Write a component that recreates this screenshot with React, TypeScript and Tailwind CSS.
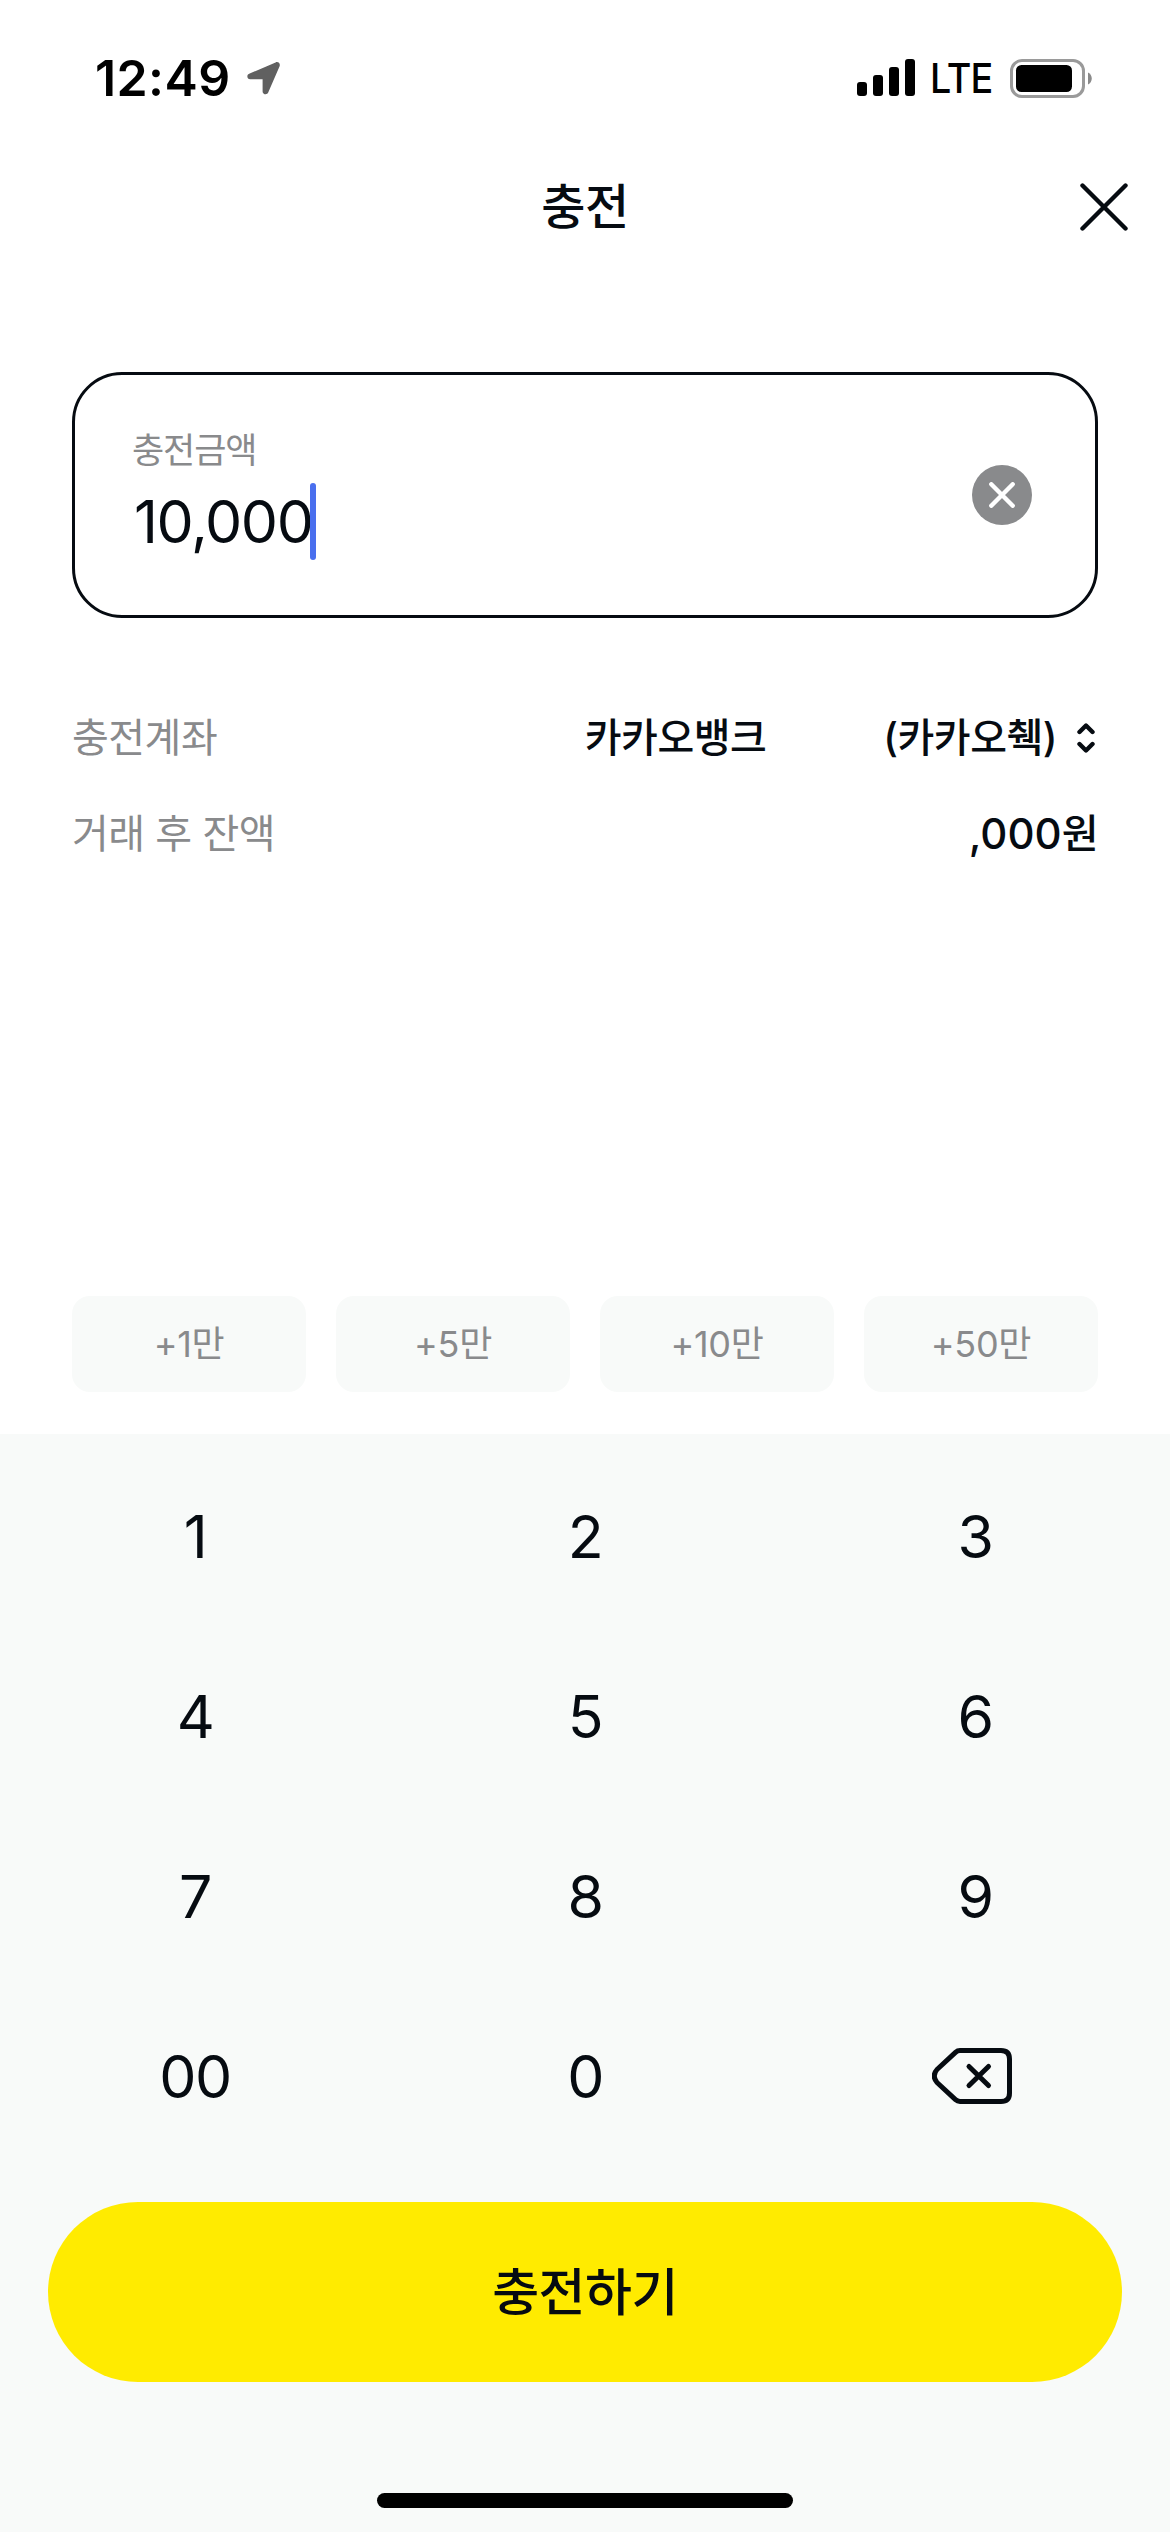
import type { ReactNode } from "react";

const quickAmounts = ["+1만", "+5만", "+10만", "+50만"];
const keys = ["1", "2", "3", "4", "5", "6", "7", "8", "9", "00", "0"];

function StatusBar() {
  return (
    <div className="flex h-[156px] items-start justify-between pt-[54px] pr-[78px] pl-[95px] text-black">
      <div className="flex h-12 items-center">
        <span className="w-[152px] text-[50px] leading-[48px] font-semibold tracking-[0.4px]">
          12:49
        </span>
        <svg width="34" height="34" viewBox="0 0 34 34" fill="#606060">
          <path d="M28.6 1.4C31.2 0.3 33.6 2.6 32.6 5.2L21.2 31.6C20.2 34.2 15.6 33.6 15.6 30.4V18.2H3.2C0 18.2 -0.7 14 2.1 12.8Z" />
        </svg>
      </div>
      <div className="flex h-12 items-center">
        <svg width="58" height="38" viewBox="0 0 58 38">
          <rect x="0" y="23" width="10" height="14" rx="3" />
          <rect x="16" y="16" width="10" height="21" rx="3" />
          <rect x="32" y="8" width="10" height="29" rx="3" />
          <rect x="48" y="0" width="10" height="37" rx="3" />
        </svg>
        <span className="ml-[15px] w-[80px] origin-left scale-x-92 text-[41px] leading-[50px] font-medium tracking-[-1px]">
          LTE
        </span>
        <svg width="82" height="39" viewBox="0 0 82 39">
          <rect
            x="1.5"
            y="1.5"
            width="72"
            height="36"
            rx="10.5"
            fill="none"
            stroke="#9a9a9a"
            strokeWidth="3"
          />
          <rect x="6" y="6" width="56" height="27" rx="5.5" />
          <path d="M78 13.5C83 15.5 83 23.5 78 25.5Z" fill="#8a8a8a" />
        </svg>
      </div>
    </div>
  );
}

function Header() {
  return (
    <div className="grid h-[102px] grid-cols-[1fr_auto_1fr] items-center px-[42px]">
      <h1 className="col-start-2 text-[48px] leading-[60px] font-medium tracking-[-0.5px]">
        충전
      </h1>
      <button className="justify-self-end">
        <svg
          width="48"
          height="48"
          viewBox="0 0 48 48"
          fill="none"
          stroke="currentColor"
          strokeWidth="4.4"
          strokeLinecap="round"
        >
          <path d="M2.5 2.5L45.5 45.5M45.5 2.5L2.5 45.5" />
        </svg>
      </button>
    </div>
  );
}

function AmountField() {
  return (
    <div className="flex h-[246px] items-center justify-between rounded-[50px] border-3 border-[#060b11] pr-[63px] pl-[57px]">
      <div className="flex flex-col">
        <span className="text-[35px] leading-[40px] tracking-[-1.1px] text-[#898a8c]">
          충전금액
        </span>
        <div className="mt-[13px] flex h-[77px] items-center">
          <span className="ml-0.5 text-[59px] leading-[78px] tracking-[-1.4px]">10,000</span>
          <span className="-ml-0.5 h-[77px] w-[6px] rounded-full bg-[#4a6fee]" />
        </div>
      </div>
      <button className="flex size-[60px] items-center justify-center rounded-full bg-[#898a8c]">
        <svg
          width="26"
          height="26"
          viewBox="0 0 26 26"
          stroke="white"
          strokeWidth="4.4"
          strokeLinecap="round"
        >
          <path d="M2.3 2.3L23.7 23.7M23.7 2.3L2.3 23.7" />
        </svg>
      </button>
    </div>
  );
}

function InfoRow({ label, children }: { label: string; children: ReactNode }) {
  return (
    <div className="flex h-12 items-center justify-between text-[40px] leading-[48px] tracking-[-0.5px]">
      <span className="text-[#898a8c]">{label}</span>
      <div className="flex items-center font-medium">{children}</div>
    </div>
  );
}

function Keypad() {
  return (
    <div className="grid auto-rows-[180px] grid-cols-3">
      {keys.map((key) => (
        <button key={key} className="text-[59px] leading-none tracking-[-1.5px]">
          {key}
        </button>
      ))}
      <button className="flex items-center justify-center pr-1.5">
        <svg
          width="80"
          height="56"
          viewBox="0 0 80 56"
          fill="none"
          stroke="currentColor"
          strokeWidth="5"
          strokeLinecap="round"
          strokeLinejoin="round"
        >
          <path d="M28 2.5H69Q77.5 2.5 77.5 11V45Q77.5 53.5 69 53.5H28Q25.5 53.5 23.5 51.7L5 34.5Q-0.5 28 5 21.5L23.5 4.3Q25.5 2.5 28 2.5Z" />
          <path d="M37 18.5L56.5 37.5M56.5 18.5L37 37.5" />
        </svg>
      </button>
    </div>
  );
}

export default function App() {
  return (
    <div className="flex h-[2532px] w-[1170px] flex-col overflow-hidden bg-white font-[Inter,'Noto_Sans_CJK_KR',sans-serif] text-[#060b11]">
      <StatusBar />
      <Header />
      <main className="flex flex-1 flex-col px-[72px] pt-[114px]">
        <AmountField />
        <div className="mt-24 flex flex-col gap-12">
          <InfoRow label="충전계좌">
            <span>카카오뱅크</span>
            {/* account number is hidden */}
            <span className="w-[117px]" />
            <span>(카카오췍)</span>
            <svg
              className="mr-[3px] ml-5"
              width="18"
              height="30"
              viewBox="0 0 18 30"
              fill="none"
              stroke="currentColor"
              strokeWidth="4.4"
              strokeLinecap="round"
              strokeLinejoin="round"
            >
              <path d="M2.5 9L9 2.5L15.5 9M2.5 21L9 27.5L15.5 21" />
            </svg>
          </InfoRow>
          <InfoRow label="거래 후 잔액">
            <span className="text-[42px] tracking-normal">,000</span>
            <span>원</span>
          </InfoRow>
        </div>
        <div className="mt-auto mb-[42px] grid grid-cols-4 gap-[30px]">
          {quickAmounts.map((amount) => (
            <button
              key={amount}
              className="h-24 rounded-[18px] bg-[#f8faf9] text-[36px] leading-none tracking-[-0.3px] text-[#898a8c]"
            >
              {amount}
            </button>
          ))}
        </div>
      </main>
      <footer className="flex h-[1098px] flex-col bg-[#f8faf9] pt-[12px]">
        <Keypad />
        <button className="mx-12 mt-9 h-[180px] rounded-full bg-[#ffeb00] text-[51px] leading-none font-medium tracking-[-0.5px]">
          충전하기
        </button>
        <div className="mx-auto mt-[111px] h-[15px] w-[416px] rounded-full bg-black" />
      </footer>
    </div>
  );
}
